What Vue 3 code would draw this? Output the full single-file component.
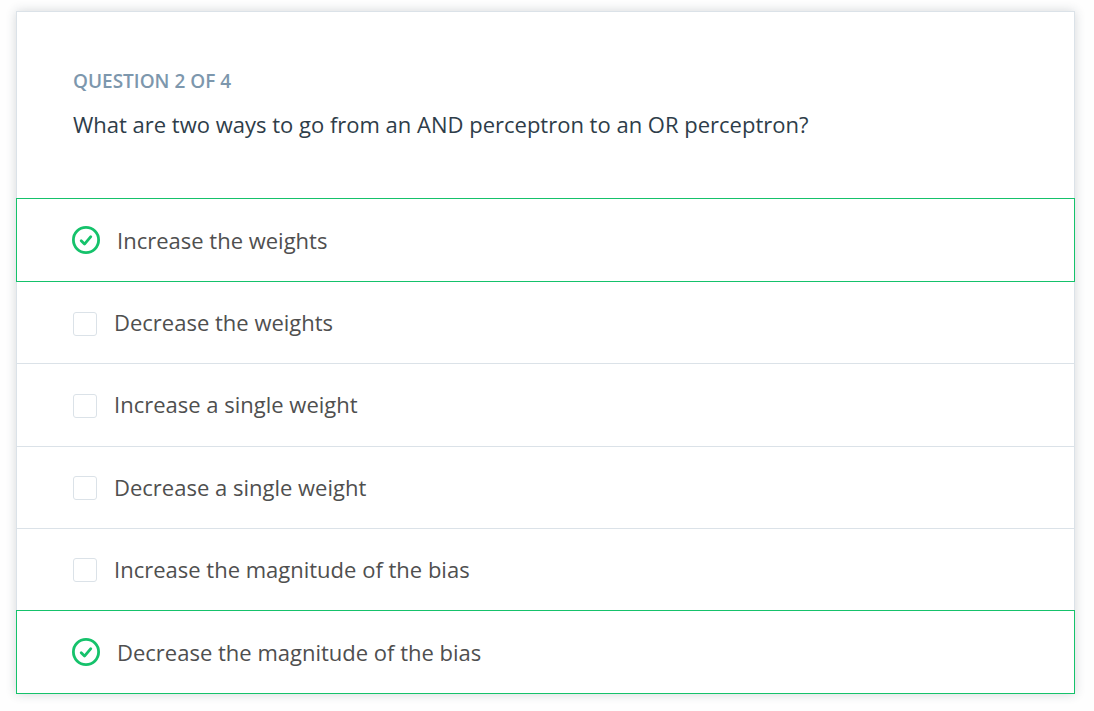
<script setup>
import { ref } from 'vue'

const options = [
  { id: 'inc-weights', label: 'Increase the weights' },
  { id: 'dec-weights', label: 'Decrease the weights' },
  { id: 'inc-single', label: 'Increase a single weight' },
  { id: 'dec-single', label: 'Decrease a single weight' },
  { id: 'inc-bias', label: 'Increase the magnitude of the bias' },
  { id: 'dec-bias', label: 'Decrease the magnitude of the bias' },
]
const selected = ref(['inc-weights', 'dec-bias'])
const isSelected = (id) => selected.value.includes(id)
</script>

<template>
  <main class="quiz">
    <header class="heading">
      <h2 class="counter">QUESTION 2 OF 4</h2>
      <p id="question" class="question">What are two ways to go from an AND perceptron to an OR perceptron?</p>
    </header>
    <ul class="options" aria-labelledby="question">
      <li v-for="o in options" :key="o.id" class="option" :class="{ correct: isSelected(o.id) }">
        <label class="choice" :for="o.id">
          <span class="mark">
            <input :id="o.id" v-model="selected" class="box" type="checkbox" :value="o.id" />
            <svg v-if="isSelected(o.id)" class="tick" viewBox="0 0 28 28" aria-hidden="true">
              <circle cx="14" cy="14" r="12.6" />
              <path d="M9.2 14.8l3.3 3.3 6.3-7.4" />
            </svg>
          </span>
          <span class="text">{{ o.label }}</span>
        </label>
      </li>
    </ul>
  </main>
</template>

<style>
body {
  background: #fefefe;
}
</style>

<style scoped>
.quiz {
  margin: 11px 19px 16px 16px;
  background: #fff;
  border: 1px solid #dbe2e8;
  border-bottom: 0;
  box-shadow: 0 0 10px rgba(46, 61, 73, 0.2);
  font-family: "Open Sans", "Noto Sans", sans-serif;
}
.heading {
  padding: 55px 56px 57px;
}
.counter {
  margin: 0;
  color: #7d97ad;
  font-size: 19px;
  font-weight: 600;
  line-height: 28px;
}
.question {
  margin: 13px 0 0;
  color: #2e3d49;
  font-size: 22px;
  line-height: 33px;
}
.options {
  display: flex;
  flex-direction: column;
  min-height: 496px;
  margin: 0;
  padding: 0;
  list-style: none;
}
.option {
  display: flex;
  flex: 1 0 auto;
  border-bottom: 1px solid #dbe2e8;
}
.option.correct {
  flex: none;
  margin: 0 -1px;
  border: 1px solid #15c26b;
  background: #fff;
}
.option + .correct {
  margin-top: -1px;
}
.choice {
  display: flex;
  flex: 1;
  align-items: center;
  min-height: 81px;
  padding: 0 56px;
  cursor: pointer;
}
.correct .choice {
  min-height: 82px;
  padding: 0 55px;
}
.mark {
  display: grid;
  flex: none;
  place-items: center;
  margin-right: 17px;
  padding-top: 2px;
}
.correct .mark {
  padding-top: 0;
}
.mark > * {
  grid-area: 1 / 1;
}
.box {
  appearance: none;
  box-sizing: border-box;
  width: 24px;
  height: 24px;
  margin: 0;
  border: 1px solid #dbe2e8;
  border-radius: 3px;
  background: #fff;
  cursor: pointer;
}
.correct .box {
  border-color: transparent;
}
.tick {
  width: 28px;
  height: 28px;
  fill: none;
  stroke: #15c26b;
  stroke-width: 2.8;
  stroke-linecap: round;
  stroke-linejoin: round;
  pointer-events: none;
}
.text {
  color: #4f4f4f;
  font-size: 22px;
  line-height: 33px;
}
</style>
